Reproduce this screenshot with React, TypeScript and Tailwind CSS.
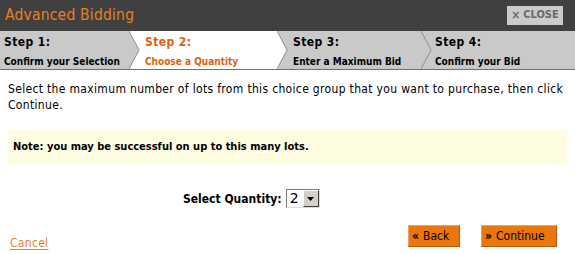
const font = "font-['Tahoma','DejaVu_Sans_Condensed','DejaVu_Sans',sans-serif]";

const steps = [
  { title: 'Step 1:', label: 'Confirm your Selection', w: 'w-[130px]', pad: 'pl-[4px]', active: false },
  { title: 'Step 2:', label: 'Choose a Quantity', w: 'w-[148px]', pad: 'pl-[15px]', active: true },
  { title: 'Step 3:', label: 'Enter a Maximum Bid', w: 'w-[144px]', pad: 'pl-[15px]', active: false },
  { title: 'Step 4:', label: 'Confirm your Bid', w: 'flex-1', pad: 'pl-[13px]', active: false },
];

function Chevron({ fill }: { fill: string }) {
  return (
    <svg className="absolute right-[-10px] top-0 z-10 h-full w-[11px]" viewBox="0 0 11 38" preserveAspectRatio="none">
      <polygon points="0,0 10,19 0,38" fill={fill} />
      <polyline points="0,0 10,19 0,38" fill="none" stroke="#8f8f8f" strokeWidth="1" />
    </svg>
  );
}

export default function App() {
  return (
    <div className={`w-[575px] h-[254px] bg-white overflow-hidden flex flex-col ${font}`}>
      {/* header */}
      <div className="h-[31px] bg-[#404040] flex items-center justify-between pl-[5px] pr-[12px]">
        <span className="text-[15.5px] text-[#e8801f] tracking-[0.2px] font-['DejaVu_Sans_Condensed','DejaVu_Sans',sans-serif] font-light">Advanced Bidding</span>
        <button className="h-[19px] w-[56px] bg-[#cbcbcb] text-[#6a6a6a] text-[11px] font-bold flex items-center justify-center gap-[3px] mt-[-1px]">
          <span className="text-[12px]">×</span>CLOSE
        </button>
      </div>

      {/* steps */}
      <div className="h-[39px] flex bg-[#c9c9c9] border-b border-[#6f6f6f]">
        {steps.map((s, i) => (
          <div key={i} className={`relative ${s.w} ${s.pad} ${s.active ? 'bg-white text-[#d9620f]' : 'text-black'} flex flex-col pt-[3px]`}>
            <span className="text-[12px] font-bold leading-[16px] tracking-[0.4px]">{s.title}</span>
            <span className="text-[10px] font-bold leading-[14px] mt-[5px] whitespace-nowrap">{s.label}</span>
            {i < steps.length - 1 && <Chevron fill={s.active ? '#ffffff' : '#c9c9c9'} />}
          </div>
        ))}
      </div>

      {/* body */}
      <div className="px-[8px] flex flex-col flex-1">
        <p className="mt-[11px] text-[12px] leading-[16px] tracking-[0.33px] text-black">
          Select the maximum number of lots from this choice group that you want to purchase, then click Continue.
        </p>
        <div className="mt-[17px] h-[34px] bg-[#fefde2] flex items-center pl-[5px]">
          <span className="text-[11px] font-bold text-black">Note: you may be successful on up to this many lots.</span>
        </div>

        <div className="mt-[25px] flex items-center gap-[4px] pl-[175px]">
          <span className="text-[12px] font-bold text-black">Select Quantity:</span>
          <div className="h-[19px] w-[34px] flex border border-t-[#7a7a7a] border-l-[#7a7a7a] border-b-[#dcdcdc] border-r-[#dcdcdc] bg-white">
            <span className="flex-1 text-[14px] leading-[17px] pl-[3px] text-black font-['DejaVu_Sans',sans-serif]">2</span>
            <span className="w-[16px] bg-[#d4d0c8] border border-t-white border-l-white border-b-[#404040] border-r-[#404040] flex items-center justify-center">
              <svg width="7" height="4" viewBox="0 0 7 4"><polygon points="0,0 7,0 3.5,4" fill="#000" /></svg>
            </span>
          </div>
        </div>

        <div className="mt-auto mb-[4px] flex items-end justify-between pl-[2px] pr-[10px]">
          <a href="#" className="text-[12px] text-[#e8801f] underline underline-offset-2 mb-[-2px] tracking-[0.3px]">Cancel</a>
          <div className="flex gap-[21px] mb-[3px]">
            <button className="h-[22px] w-[52px] bg-[#ea760e] border border-[#f0a060] border-b-[#b45a10] border-r-[#b45a10] text-[12px] text-black flex items-center pl-[3px] gap-[4px]">
              <span className="font-bold text-[12px]">«</span>Back
            </button>
            <button className="h-[22px] w-[76px] bg-[#ea760e] border border-[#f0a060] border-b-[#b45a10] border-r-[#b45a10] text-[12px] text-black flex items-center pl-[3px] gap-[4px]">
              <span className="font-bold text-[12px]">»</span>Continue
            </button>
          </div>
        </div>
      </div>
    </div>
  );
}
